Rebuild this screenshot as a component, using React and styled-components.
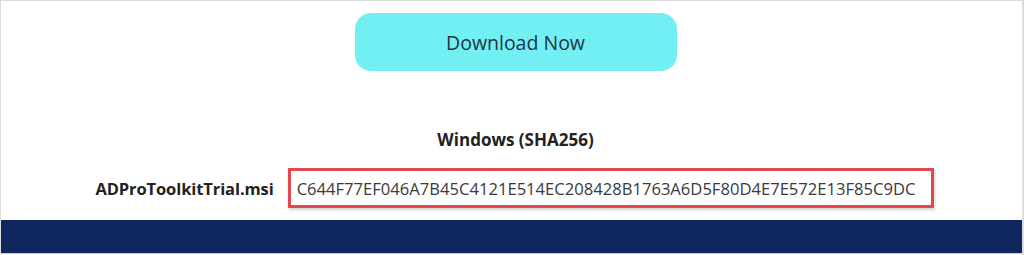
import React from "react";
import styled, { createGlobalStyle } from "styled-components";

const Global = createGlobalStyle`
  html, body { margin: 0; padding: 0; background: #fff; }
  body { font-family: "Open Sans", "Noto Sans", sans-serif; }
`;

const Frame = styled.div`
  width: 1024px;
  height: 255px;
  box-sizing: border-box;
  border: 1px solid #dcdcdc;
  border-right-width: 2px;
  border-bottom: none;
  display: flex;
  flex-direction: column;
  align-items: center;
  overflow: hidden;
  background: #fff;
`;

const ButtonWrap = styled.div`
  padding-top: 12px;
  padding-left: 8px;
  display: flex;
  justify-content: center;
`;

const DownloadButton = styled.button`
  width: 322px;
  height: 58px;
  border: none;
  border-radius: 16px;
  background: #72eff2;
  color: #1e3544;
  font-family: "Open Sans", sans-serif;
  font-size: 19.5px;
  cursor: pointer;
`;

const Heading = styled.h3`
  margin: 58px 0 0 8px;
  font-family: "Open Sans", sans-serif;
  font-weight: 700;
  font-size: 17px;
  color: #222;
  line-height: 22px;
`;

const HashRow = styled.div`
  margin-top: 17px;
  margin-left: 6px;
  display: flex;
  align-items: center;
  gap: 14px;
`;

const FileLabel = styled.span`
  font-family: "Open Sans", sans-serif;
  font-weight: 700;
  font-size: 16.5px;
  color: #222;
  letter-spacing: -0.1px;
`;

const HashBox = styled.div`
  width: 646px;
  height: 40px;
  box-sizing: border-box;
  border: 3px solid #e4474d;
  box-shadow: 1px 2px 3px rgba(0, 0, 0, 0.18);
  display: flex;
  align-items: center;
  padding-left: 6px;
  font-family: "Open Sans", sans-serif;
  font-size: 16.6px;
  color: #3a3a3a;
`;

const Footer = styled.div`
  margin-top: 12px;
  align-self: stretch;
  height: 33px;
  background: #10265f;
  border-bottom: 1px solid #c9d0dc;
`;

export default function App() {
  return (
    <>
      <Global />
      <Frame>
        <ButtonWrap>
          <DownloadButton>Download Now</DownloadButton>
        </ButtonWrap>
        <Heading>Windows (SHA256)</Heading>
        <HashRow>
          <FileLabel>ADProToolkitTrial.msi</FileLabel>
          <HashBox>C644F77EF046A7B45C4121E514EC208428B1763A6D5F80D4E7E572E13F85C9DC</HashBox>
        </HashRow>
        <Footer />
      </Frame>
    </>
  );
}
